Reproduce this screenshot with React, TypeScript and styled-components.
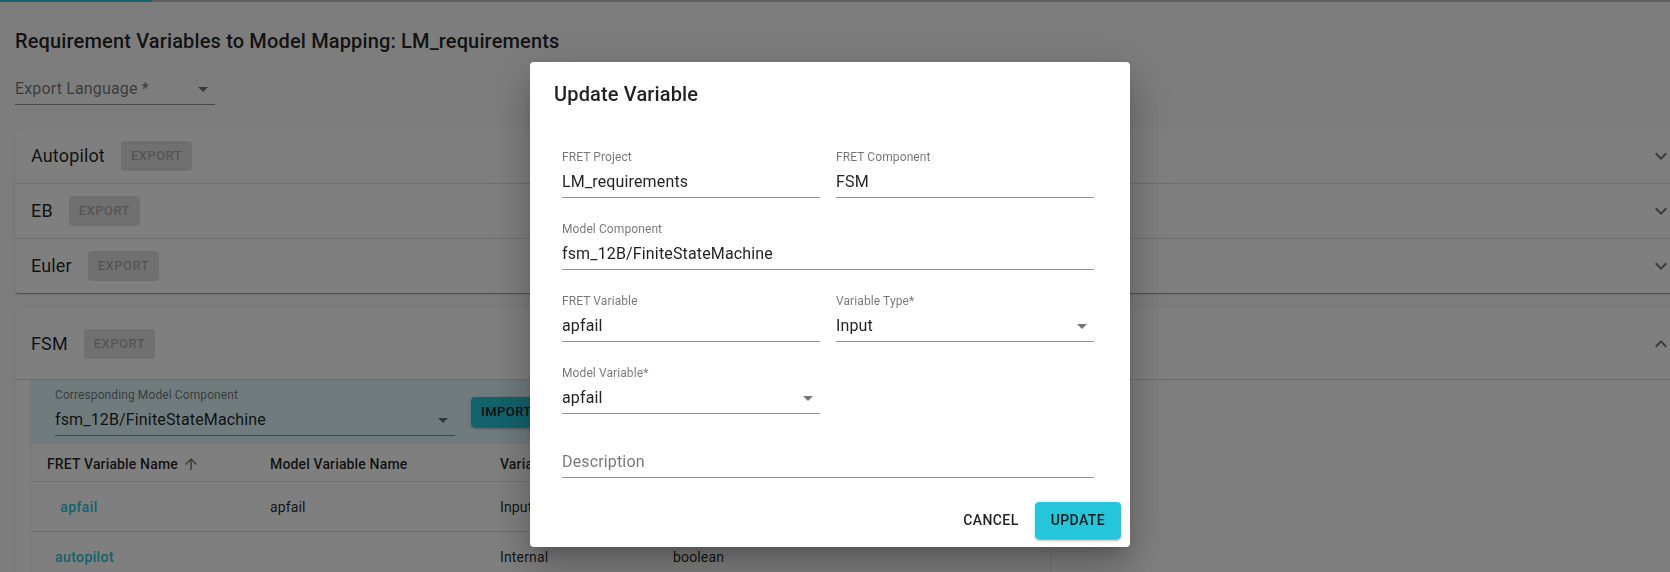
import React from 'react';
import styled, { createGlobalStyle } from 'styled-components';

const TEXT = 'rgba(0, 0, 0, 0.87)';
const MUTED = 'rgba(0, 0, 0, 0.54)';
const DIVIDER = 'rgba(0, 0, 0, 0.12)';
const CYAN = '#26c6da';
const ELEVATION_1 =
  '0px 2px 1px -1px rgba(0,0,0,0.2), 0px 1px 1px 0px rgba(0,0,0,0.14), 0px 1px 3px 0px rgba(0,0,0,0.12)';
const ELEVATION_2 =
  '0px 3px 1px -2px rgba(0,0,0,0.2), 0px 2px 2px 0px rgba(0,0,0,0.14), 0px 1px 5px 0px rgba(0,0,0,0.12)';
const ELEVATION_24 =
  '0px 11px 15px -7px rgba(0,0,0,0.2), 0px 24px 38px 3px rgba(0,0,0,0.14), 0px 9px 46px 8px rgba(0,0,0,0.12)';

const GlobalStyle = createGlobalStyle`
  * { box-sizing: border-box; }
  html, body {
    margin: 0;
    padding: 0;
    background: #fafafa;
    overflow: hidden;
  }
  body {
    font-family: Roboto, "Liberation Sans", Arial, sans-serif;
    color: ${TEXT};
    -webkit-font-smoothing: antialiased;
  }
`;

const TopStrip = styled.div`
  display: flex;
  height: 2px;
  background: #c2c2c2;
`;

const TabIndicator = styled.div`
  width: 152px;
  background: ${CYAN};
`;

const Page = styled.main`
  padding: 23px 0 0 15px;
`;

const PageTitle = styled.h1`
  margin: 0;
  font-size: 20px;
  font-weight: 500;
  line-height: 32px;
  letter-spacing: 0.15px;
`;

/* text field / select, MUI "standard" look */
const Field = styled.div<{ $width?: number; $full?: boolean; $pull?: number }>`
  display: flex;
  flex-direction: column;
  width: ${(p) => (p.$width ? `${p.$width}px` : 'auto')};
  grid-column: ${(p) => (p.$full ? '1 / -1' : 'auto')};
  margin-top: ${(p) => (p.$pull ? -p.$pull : 0)}px;
`;

const FieldLabel = styled.span`
  height: 14px;
  font-size: 12px;
  line-height: 14px;
  letter-spacing: 0.1px;
  color: ${MUTED};
`;

const FieldValue = styled.div<{ $empty?: boolean }>`
  display: flex;
  align-items: center;
  justify-content: space-between;
  height: 26px;
  margin-top: 8px;
  padding-bottom: 6px;
  border-bottom: 1px solid rgba(0, 0, 0, 0.42);
  font-size: 16px;
  line-height: 19px;
  letter-spacing: 0.15px;
  color: ${(p) => (p.$empty ? MUTED : TEXT)};
`;

const Icon = styled.svg<{ $size?: number; $push?: boolean }>`
  width: ${(p) => p.$size ?? 24}px;
  height: ${(p) => p.$size ?? 24}px;
  flex-shrink: 0;
  fill: ${MUTED};
  margin-left: ${(p) => (p.$push ? 'auto' : '0')};
`;

const DropArrow = () => (
  <Icon viewBox="0 0 24 24">
    <path d="M7 10l5 5 5-5z" />
  </Icon>
);

const ExpandMore = () => (
  <Icon viewBox="0 0 24 24" $push>
    <path d="M16.59 8.59L12 13.17 7.41 8.59 6 10l6 6 6-6z" />
  </Icon>
);

const ExpandLess = () => (
  <Icon viewBox="0 0 24 24" $push>
    <path d="M12 8l-6 6 1.41 1.41L12 10.83l4.59 4.58L18 14z" />
  </Icon>
);

const SortArrow = () => (
  <Icon viewBox="0 0 24 24" $size={18}>
    <path d="M4 12l1.41 1.41L11 7.83V20h2V7.83l5.58 5.59L20 12l-8-8-8 8z" />
  </Icon>
);

/* accordion list */
const Accordions = styled.section`
  width: 1674px;
  margin-top: 24px;
`;

const Panel = styled.div<{ $expanded?: boolean; $divider?: boolean; $radius?: string }>`
  background: #fff;
  box-shadow: ${ELEVATION_1};
  border-top: ${(p) => (p.$divider ? `1px solid ${DIVIDER}` : 'none')};
  border-radius: ${(p) => p.$radius ?? '0'};
  margin: ${(p) => (p.$expanded ? '16px 0' : '0')};
`;

const Summary = styled.div<{ $expanded?: boolean }>`
  display: flex;
  align-items: center;
  gap: 16px;
  padding: ${(p) => (p.$expanded ? '20px 16px' : '12px 16px')};
  border-bottom: ${(p) => (p.$expanded ? `1px solid ${DIVIDER}` : 'none')};
`;

const PanelName = styled.span`
  font-size: 18px;
  line-height: 24px;
  letter-spacing: 0.15px;
`;

const SmallButton = styled.button<{ $tone: 'disabled' | 'cyan' }>`
  min-width: 64px;
  padding: 4px 10px;
  border: 0;
  border-radius: 4px;
  font-family: inherit;
  font-size: 13px;
  font-weight: 500;
  line-height: 22px;
  letter-spacing: 0.46px;
  text-transform: uppercase;
  background: ${(p) => (p.$tone === 'cyan' ? CYAN : 'rgba(0, 0, 0, 0.12)')};
  color: ${(p) => (p.$tone === 'cyan' ? TEXT : 'rgba(0, 0, 0, 0.26)')};
  box-shadow: ${(p) => (p.$tone === 'cyan' ? ELEVATION_2 : 'none')};
`;

const Details = styled.div`
  padding: 0 16px 16px;
`;

const TablePaper = styled.div`
  width: 1019px;
  background: #fff;
  box-shadow: ${ELEVATION_1};
`;

const ComponentBar = styled.div`
  display: flex;
  align-items: center;
  gap: 16px;
  padding: 8px 24px;
  background: #e0f7fa;
`;

const Table = styled.table`
  width: 100%;
  border-collapse: collapse;
  table-layout: fixed;
  font-size: 14px;
  letter-spacing: 0.15px;
`;

const HeadCell = styled.th<{ $width?: number }>`
  width: ${(p) => (p.$width ? `${p.$width}px` : 'auto')};
  padding: 8px 16px 5px;
  text-align: left;
  font-weight: 500;
  line-height: 24px;
  border-bottom: 1px solid #e0e0e0;
`;

const SortLabel = styled.span`
  display: inline-flex;
  align-items: center;
  gap: 4px;
`;

const BodyCell = styled.td`
  height: 50px;
  padding: 0 16px;
  vertical-align: middle;
  line-height: 20px;
  border-bottom: 1px solid #e0e0e0;
`;

const VarButton = styled.button`
  min-width: 64px;
  padding: 6px 8px;
  border: 0;
  background: none;
  font-family: inherit;
  font-size: 14px;
  font-weight: 500;
  line-height: 24px;
  letter-spacing: 0.4px;
  color: ${CYAN};
`;

/* dialog */
const Backdrop = styled.div`
  position: fixed;
  inset: 0;
  display: flex;
  justify-content: center;
  align-items: flex-start;
  padding: 62px 10px 0 0;
  background: rgba(0, 0, 0, 0.5);
`;

const Dialog = styled.div`
  width: 600px;
  background: #fff;
  border-radius: 4px;
  box-shadow: ${ELEVATION_24};
`;

const DialogTitle = styled.h2`
  margin: 0;
  padding: 16px 24px;
  font-size: 20px;
  font-weight: 500;
  line-height: 32px;
  letter-spacing: 0.15px;
`;

const DialogBody = styled.div`
  display: grid;
  grid-template-columns: 1fr 1fr;
  column-gap: 16px;
  row-gap: 24px;
  padding: 24px 36px 16px 32px;
`;

const DialogActions = styled.div`
  display: flex;
  justify-content: flex-end;
  gap: 8px;
  padding: 8px 9px 8px 8px;
`;

const ActionButton = styled.button<{ $contained?: boolean }>`
  min-width: 64px;
  padding: ${(p) => (p.$contained ? '6px 16px' : '6px 8px')};
  border: 0;
  border-radius: 4px;
  font-family: inherit;
  font-size: 14px;
  font-weight: 500;
  line-height: 24.5px;
  letter-spacing: 0.4px;
  text-transform: uppercase;
  color: ${TEXT};
  background: ${(p) => (p.$contained ? CYAN : 'transparent')};
  box-shadow: ${(p) => (p.$contained ? ELEVATION_2 : 'none')};
`;

type Row = { fret: string; model: string; type: string; data: string };

const rows: Row[] = [
  { fret: 'apfail', model: 'apfail', type: 'Input', data: 'boolean' },
  { fret: 'autopilot', model: '', type: 'Internal', data: 'boolean' },
];

const collapsed = ['Autopilot', 'EB', 'Euler'];

const TextField = ({
  label,
  value,
  select,
  width,
  full,
  pull,
  placeholder,
}: {
  label?: string;
  value?: string;
  select?: boolean;
  width?: number;
  full?: boolean;
  pull?: number;
  placeholder?: string;
}) => (
  <Field $width={width} $full={full} $pull={pull}>
    <FieldLabel>{label}</FieldLabel>
    <FieldValue $empty={!value}>
      <span>{value || placeholder}</span>
      {select && <DropArrow />}
    </FieldValue>
  </Field>
);

export default function App() {
  return (
    <>
      <GlobalStyle />
      <TopStrip>
        <TabIndicator />
      </TopStrip>
      <Page>
        <PageTitle>Requirement Variables to Model Mapping: LM_requirements</PageTitle>
        <TextField width={200} placeholder="Export Language *" select />

        <Accordions>
          {collapsed.map((name, i) => (
            <Panel
              key={name}
              $divider={i > 0}
              $radius={i === 0 ? '4px 4px 0 0' : i === collapsed.length - 1 ? '0 0 4px 4px' : '0'}
            >
              <Summary>
                <PanelName>{name}</PanelName>
                <SmallButton $tone="disabled" disabled>
                  Export
                </SmallButton>
                <ExpandMore />
              </Summary>
            </Panel>
          ))}

          <Panel $expanded $radius="4px">
            <Summary $expanded>
              <PanelName>FSM</PanelName>
              <SmallButton $tone="disabled" disabled>
                Export
              </SmallButton>
              <ExpandLess />
            </Summary>
            <Details>
              <TablePaper>
                <ComponentBar>
                  <TextField
                    width={400}
                    label="Corresponding Model Component"
                    value="fsm_12B/FiniteStateMachine"
                    select
                  />
                  <SmallButton $tone="cyan">Import</SmallButton>
                </ComponentBar>
                <Table>
                  <thead>
                    <tr>
                      <HeadCell $width={223}>
                        <SortLabel>
                          FRET Variable Name
                          <SortArrow />
                        </SortLabel>
                      </HeadCell>
                      <HeadCell $width={230}>Model Variable Name</HeadCell>
                      <HeadCell $width={173}>Variable Type</HeadCell>
                      <HeadCell>Data Type</HeadCell>
                    </tr>
                  </thead>
                  <tbody>
                    {rows.map((r) => (
                      <tr key={r.fret}>
                        <BodyCell>
                          <VarButton>{r.fret}</VarButton>
                        </BodyCell>
                        <BodyCell>{r.model}</BodyCell>
                        <BodyCell>{r.type}</BodyCell>
                        <BodyCell>{r.data}</BodyCell>
                      </tr>
                    ))}
                  </tbody>
                </Table>
              </TablePaper>
            </Details>
          </Panel>
        </Accordions>
      </Page>

      <Backdrop>
        <Dialog>
          <DialogTitle>Update Variable</DialogTitle>
          <DialogBody>
            <TextField label="FRET Project" value="LM_requirements" />
            <TextField label="FRET Component" value="FSM" />
            <TextField full label="Model Component" value="fsm_12B/FiniteStateMachine" />
            <TextField label="FRET Variable" value="apfail" />
            <TextField label="Variable Type*" value="Input" select />
            <TextField label="Model Variable*" value="apfail" select />
            <TextField full pull={8} placeholder="Description" />
          </DialogBody>
          <DialogActions>
            <ActionButton>Cancel</ActionButton>
            <ActionButton $contained>Update</ActionButton>
          </DialogActions>
        </Dialog>
      </Backdrop>
    </>
  );
}
